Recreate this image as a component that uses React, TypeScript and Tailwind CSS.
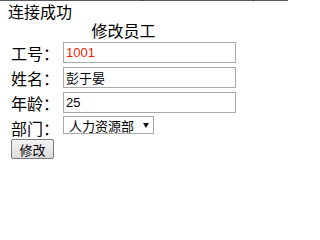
import React from 'react';

const fields = [
  { label: '工号：', value: '1001', red: true },
  { label: '姓名：', value: '彭于晏', red: false },
  { label: '年龄：', value: '25', red: false },
];

const App = () => {
  return (
    <div
      className="relative w-[292px] h-[208px] bg-white text-black overflow-hidden"
      style={{ fontFamily: '"Noto Sans CJK SC", "Liberation Sans", sans-serif' }}
    >
      {/* top edge */}
      <div className="relative h-px w-[288px] bg-[#5c5c5c]">
        <span className="absolute left-[142px] top-0 h-px w-px bg-[#1a1a1a]" />
        <span className="absolute left-[253px] top-0 h-px w-px bg-[#1a1a1a]" />
      </div>

      <div className="pl-2 h-[19px] flex items-center text-[16px] leading-[16px]">连接成功</div>

      <div className="ml-2 w-[231px] h-[20px] flex items-center justify-center text-[16px] leading-[16px]">修改员工</div>

      <div className="flex flex-col">
        {fields.map((f) => (
          <div key={f.label} className="flex items-center h-[25px] pl-[11px]">
            <span className="w-[52px] text-[16px] leading-[16px]">{f.label}</span>
            <input
              readOnly
              value={f.value}
              className={`w-[173px] h-[21px] border border-[#a9a9a9] px-[2px] py-0 text-[13px] leading-[17px] outline-none ${
                f.red ? 'text-[#f2200d]' : 'text-black'
              }`}
              style={{ fontFamily: '"Liberation Sans", "Noto Sans CJK SC", sans-serif' }}
            />
          </div>
        ))}

        <div className="flex items-start h-[24px] pl-[11px] pt-px">
          <span className="w-[52px] self-center text-[16px] leading-[16px]">部门：</span>
          <div className="flex items-center justify-between w-[91px] h-[18px] border border-[#a9a9a9] bg-white pl-[5px] pr-[4px]">
            <span className="text-[13px] leading-[13px]">人力资源部</span>
            <svg className="w-[6px] h-[5px]" viewBox="0 0 6 5">
              <path d="M0 0 H6 L3 5 Z" fill="#111" />
            </svg>
          </div>
        </div>

        <div className="pl-[11px]">
          <button className="flex items-center justify-center w-[43px] h-[20px] border border-[#7a7a7a] rounded-[2px] bg-gradient-to-b from-[#f4f4f4] to-[#dcdcdc] text-[13px] leading-[13px]">
            修改
          </button>
        </div>
      </div>
    </div>
  );
};

export default App;
